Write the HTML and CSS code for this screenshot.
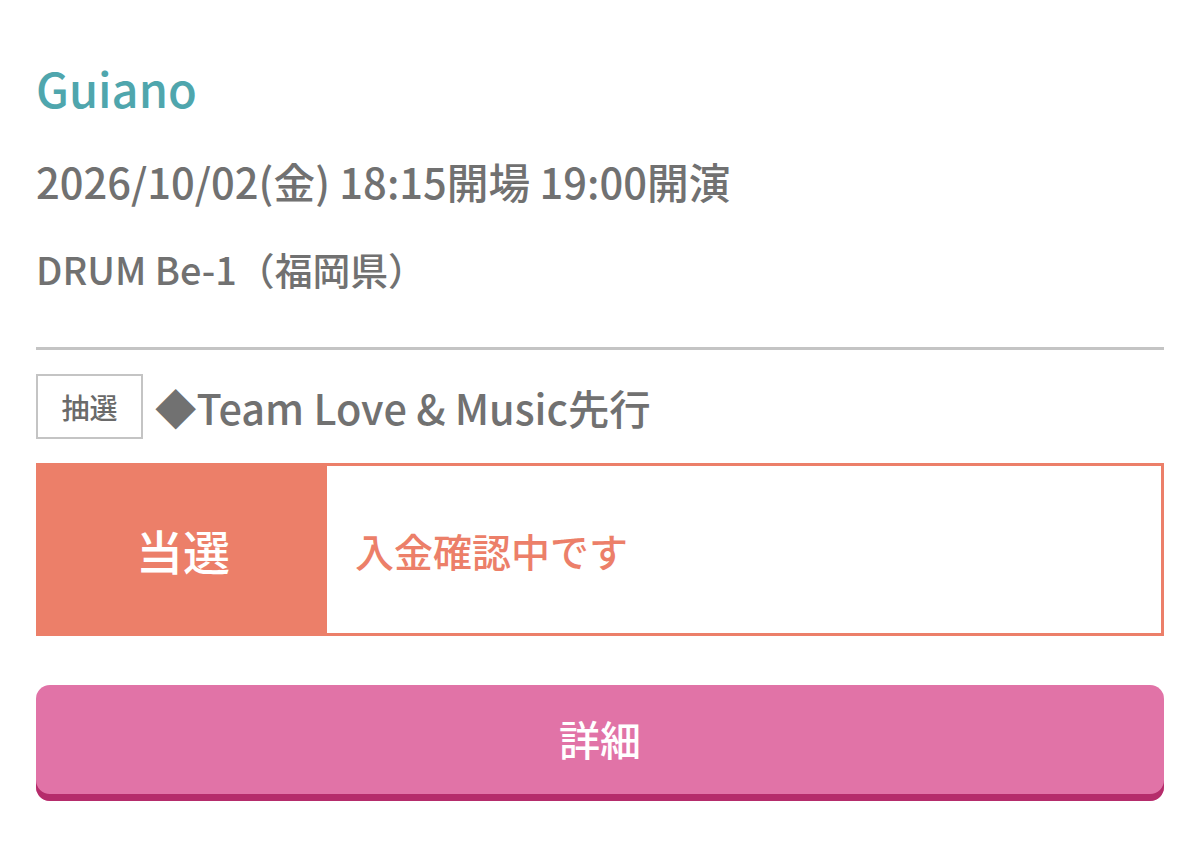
FILE: index.html
```html
<!DOCTYPE html>
<html lang="ja">
<head>
<meta charset="utf-8">
<title>Guiano</title>
<link rel="stylesheet" href="styles.css">
</head>
<body>
<main class="page">
  <section class="event">
    <h1 class="artist">Guiano</h1>
    <p class="date">2026/10/02(金) 18:15開場 19:00開演</p>
    <p class="venue">DRUM Be-1（福岡県）</p>
  </section>
  <hr class="divider">
  <div class="lottery">
    <span class="badge">抽選</span>
    <span class="lottery-name">◆Team Love &amp; Music先行</span>
  </div>
  <div class="result">
    <div class="result-label">当選</div>
    <div class="result-status">入金確認中です</div>
  </div>
  <button class="detail-btn" type="button">詳細</button>
</main>
</body>
</html>
```

FILE: styles.css
```css
* { box-sizing: border-box; }
html, body { margin: 0; padding: 0; background: #fff; }
body {
  font-family: "Noto Sans CJK JP", "Noto Sans", sans-serif;
  font-weight: 500;
  color: #717171;
}
.page {
  padding: 58px 36px 0;
  display: flex;
  flex-direction: column;
}
.event { display: flex; flex-direction: column; }
.artist {
  margin: 0;
  font-size: 47px;
  font-weight: 500;
  line-height: 60px;
  color: #4fa6ad;
}
.date {
  margin: 35px 0 0;
  font-size: 41.7px;
  line-height: 56px;
}
.venue {
  margin: 35px 0 0;
  font-size: 37.8px;
  line-height: 50px;
}
.divider {
  margin: 53px 0 0;
  border: 0;
  height: 3px;
  background: #c4c4c4;
}
.lottery {
  margin-top: 24px;
  display: flex;
  align-items: center;
  gap: 12px;
}
.badge {
  width: 107px;
  height: 65px;
  border: 2px solid #c4c4c4;
  display: flex;
  align-items: center;
  justify-content: center;
  font-size: 28px;
  color: #6a6a6a;
}
.lottery-name {
  font-size: 41.4px;
  line-height: 56px;
}
.result {
  margin-top: 24px;
  height: 173px;
  border: 3px solid #ec7f69;
  display: flex;
}
.result-label {
  width: 288px;
  background: #ec7f69;
  color: #fff;
  font-size: 47px;
  display: flex;
  align-items: center;
  justify-content: center;
}
.result-status {
  flex: 1;
  display: flex;
  align-items: center;
  padding-left: 28px;
  font-size: 39px;
  color: #ec7f69;
}
.detail-btn {
  margin-top: 49px;
  height: 116px;
  border: 0;
  border-radius: 14px;
  background: #e173a7;
  box-shadow: inset 0 -7px 0 #b52c6b;
  color: #fff;
  font-family: inherit;
  font-weight: 500;
  font-size: 41px;
  padding: 0 0 10px;
  cursor: pointer;
}
```
